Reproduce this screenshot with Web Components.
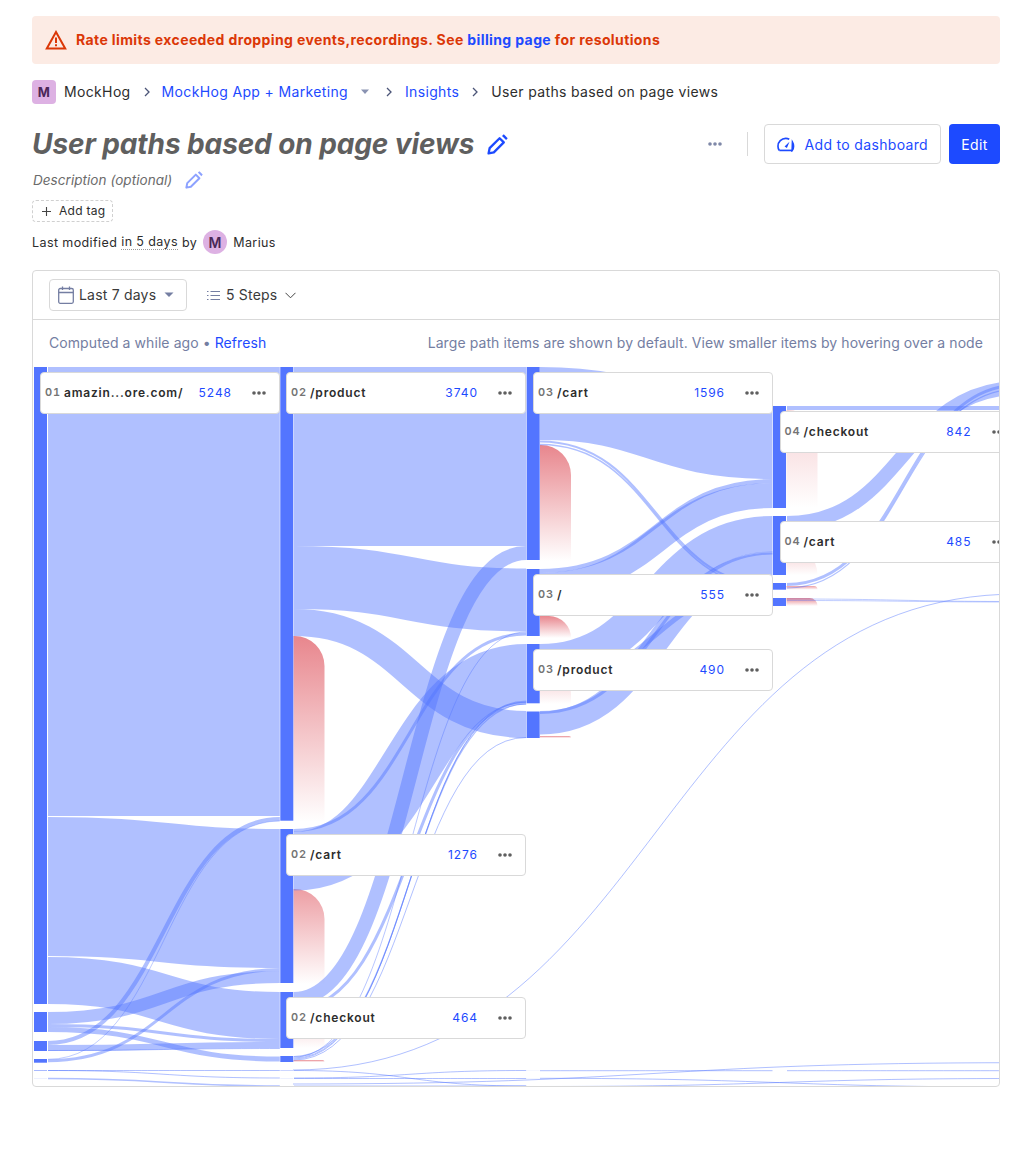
<!DOCTYPE html>
<html>
<head>
<meta charset="utf-8">
<title>User paths</title>
<style>
  html, body { margin: 0; background: #fff; }
  body {
    padding: 16px 32px 0;
    font-family: Inter, "Liberation Sans", sans-serif;
    color: #2d2d2d;
  }
</style>
</head>
<body>
<app-alert>Rate limits exceeded dropping events,recordings. See <a>billing page</a> for resolutions</app-alert>
<app-breadcrumbs></app-breadcrumbs>
<insight-header></insight-header>
<insight-card>
  <path-sankey>
    <path-node step="01" name="amazin...ore.com/" count="5248" style="left:7px;top:5px"></path-node>
    <path-node step="02" name="/product" count="3740" style="left:253px;top:5px"></path-node>
    <path-node step="02" name="/cart" count="1276" style="left:253px;top:467px"></path-node>
    <path-node step="02" name="/checkout" count="464" style="left:253px;top:630px"></path-node>
    <path-node step="03" name="/cart" count="1596" style="left:500px;top:5px"></path-node>
    <path-node step="03" name="/" count="555" style="left:500px;top:207px"></path-node>
    <path-node step="03" name="/product" count="490" style="left:500px;top:282px"></path-node>
    <path-node step="04" name="/checkout" count="842" style="left:746.5px;top:44px"></path-node>
    <path-node step="04" name="/cart" count="485" style="left:746.5px;top:154px"></path-node>
  </path-sankey>
</insight-card>

<script>
let dotsIcon = (color) => `<svg width="14" height="14" viewBox="0 0 14 14" fill="${color}"><circle cx="2" cy="7" r="1.800"/><circle cx="7" cy="7" r="1.800"/><circle cx="12" cy="7" r="1.800"/></svg>`;
let pencilIcon = (color, size) => `<svg width="${size}" height="${size}" viewBox="0 0 20 20" fill="none" stroke="${color}" stroke-width="2.200"><path d="M1.500 18.500l1-5 9.500-9.500 4 4L6.500 17.500z" stroke-linejoin="round"/><path d="M14.300 1.800l1.700-1.500 3.700 3.700-1.500 1.700z" fill="${color}" stroke="none"/></svg>`;

class AppAlert extends HTMLElement {
  constructor() {
    super();
    this.attachShadow({mode: 'open'}).innerHTML = `
      <style>
        :host {
          display: flex;
          align-items: center;
          gap: 9px;
          height: 48px;
          padding: 0 13px;
          box-sizing: border-box;
          background: #fcebe4;
          border-radius: 4px;
          color: #db3707;
          font-size: 14px;
          font-weight: 700;
          letter-spacing: 0.385px;
        }
        span { padding-bottom: 2px; }
        ::slotted(a) { color: #1d4aff; }
      </style>
      <svg width="22" height="20" viewBox="0 0 22 20" fill="none" stroke="#db3707" stroke-width="2"><path d="M11 2L1.800 18.500h18.400z"/><path d="M11 7.500v5.500"/><path d="M11 14.300v2"/></svg>
      <span><slot></slot></span>`;
  }
}
customElements.define('app-alert', AppAlert);

class AppBreadcrumbs extends HTMLElement {
  constructor() {
    super();
    let chevron = `<svg class="chev" width="6" height="10" viewBox="0 0 6 10" fill="none" stroke="#4b5578" stroke-width="1.300"><path d="M1 1l4 4-4 4"/></svg>`;
    this.attachShadow({mode: 'open'}).innerHTML = `
      <style>
        :host {
          display: flex;
          align-items: center;
          height: 24px;
          margin-top: 16px;
          font-size: 14px;
          letter-spacing: 0.35px;
          color: #2d2d2d;
        }
        .logo {
          width: 24px; height: 24px;
          border-radius: 4px;
          background: #ddb1e3;
          color: #4a2758;
          font-weight: 700;
          font-size: 13px;
          display: flex; align-items: center; justify-content: center;
          margin-right: 8px;
        }
        a, .txt { padding-bottom: 2px; }
        a { color: #1d4aff; }
        .chev { margin: 0 13px; }
        .caret { margin: 0 -1px 0 12px; }
      </style>
      <span class="logo">M</span>
      <span class="txt">MockHog</span>
      ${chevron.replace('class="chev"', 'class="chev" style="margin-right:12px"')}
      <a>MockHog App + Marketing</a>
      <svg class="caret" width="10" height="6" viewBox="0 0 10 6" fill="#8a93b2"><path d="M1 0.500h8L5 5z"/></svg>
      ${chevron.replace('class="chev"', 'class="chev" style="margin-left:17px"')}
      <a>Insights</a>
      ${chevron}
      <span class="txt">User paths based on page views</span>`;
  }
}
customElements.define('app-breadcrumbs', AppBreadcrumbs);

class InsightHeader extends HTMLElement {
  constructor() {
    super();
    this.attachShadow({mode: 'open'}).innerHTML = `
      <style>
        :host { display: block; margin-top: 20px; }
        .top { display: flex; align-items: center; height: 40px; }
        h1 {
          margin: 0;
          font-size: 28px;
          font-weight: 700;
          font-style: italic;
          color: #5f5f5f;
          letter-spacing: -0.1px;
          white-space: nowrap;
        }
        .title-edit { margin-left: 13px; display: flex; }
        .actions { margin-left: auto; display: flex; align-items: center; }
        .more { display: flex; margin-right: 25px; }
        .divider { width: 1px; height: 24px; background: #d9d9d9; margin-right: 16px; }
        button {
          font: inherit;
          font-size: 14px;
          letter-spacing: 0.33px;
          height: 40px;
          border-radius: 4px;
          display: flex;
          align-items: center;
          box-sizing: border-box;
          padding: 0 12px;
        }
        .dash {
          background: #fff;
          border: 1px solid #d9d9d9;
          color: #1d4aff;
          gap: 10px;
          width: 177px;
          white-space: nowrap;
        }
        .edit {
          background: #1d4aff;
          border: 0;
          color: #fff;
          margin-left: 8px;
          width: 51px;
          justify-content: center;
        }
        .desc {
          display: flex;
          align-items: center;
          gap: 13px;
          height: 20px;
          margin-top: 6px;
          font-size: 13.5px;
          letter-spacing: 0.05px;
          font-style: italic;
          color: #6b6b6b;
        }
        .desc span { margin-left: 1px; }
        .tag {
          display: inline-flex;
          align-items: center;
          gap: 7px;
          height: 22px;
          width: 81px;
          box-sizing: border-box;
          margin-top: 10px;
          padding-left: 8px;
          border: 1px dashed #d0d0d0;
          border-radius: 4px;
          font-size: 12px;
          letter-spacing: 0.3px;
          vertical-align: top;
        }
        .tag span { padding-bottom: 2px; }
        .meta {
          display: flex;
          align-items: center;
          height: 24px;
          margin-top: 8px;
          font-size: 12.5px;
          letter-spacing: 0.4px;
        }
        .when { border-bottom: 1px dotted #999; margin: 0 4px; line-height: 14px; }
        .avatar {
          width: 24px; height: 24px;
          border-radius: 50%;
          background: #ddb1e3;
          color: #4a2758;
          font-size: 14px;
          font-weight: 600;
          display: flex; align-items: center; justify-content: center;
          margin: 0 6px;
        }
      </style>
      <div class="top">
        <h1>User paths based on page views</h1>
        <span class="title-edit">${pencilIcon('#1d4aff', 21)}</span>
        <div class="actions">
          <span class="more">${dotsIcon('#7f88a8')}</span>
          <span class="divider"></span>
          <button class="dash">
            <svg width="18" height="16" viewBox="0 0 18 16" fill="none" stroke="#1d4aff" stroke-width="1.700"><path d="M2.400 14.600C1.400 13.400 1 12 1 10.200 1 5.800 4.600 2.200 9 2.200c1.300 0 2.500.3 3.600.9"/><path d="M15.900 6c.7 1.200 1.100 2.700 1.100 4.200 0 1.800-.4 3.200-1.400 4.400z"/><path d="M2.400 14.600h13.200"/><path d="M7.800 10.600l5-4.800-2.600 6.200z" fill="#1d4aff" stroke="none"/></svg>
            Add to dashboard
          </button>
          <button class="edit">Edit</button>
        </div>
      </div>
      <div class="desc"><span>Description (optional)</span>${pencilIcon('#8da2ff', 18)}</div>
      <div class="tag">
        <svg width="11" height="11" viewBox="0 0 11 11" stroke="#444" stroke-width="1.100"><path d="M5.500 1v9M1 5.500h9"/></svg>
        <span>Add tag</span>
      </div>
      <div class="meta">Last modified <span class="when">in 5 days</span> by <span class="avatar">M</span> Marius</div>`;
  }
}
customElements.define('insight-header', InsightHeader);

class InsightCard extends HTMLElement {
  constructor() {
    super();
    this.attachShadow({mode: 'open'}).innerHTML = `
      <style>
        :host {
          display: block;
          margin-top: 16px;
          border: 1px solid #d9d9d9;
          border-radius: 4px;
          overflow: hidden;
          height: 817px;
          box-sizing: border-box;
          font-size: 14px;
        }
        .toolbar {
          display: flex;
          align-items: center;
          height: 49px;
          box-sizing: border-box;
          padding: 0 16px;
          border-bottom: 1px solid #d9d9d9;
          letter-spacing: 0.2px;
          color: #3a3a3a;
        }
        .date {
          display: flex;
          align-items: center;
          width: 138px;
          height: 32px;
          box-sizing: border-box;
          padding-left: 8px;
          border: 1px solid #d9d9d9;
          border-radius: 4px;
        }
        .label { padding-bottom: 2px; }
        .date .label { margin-left: 5px; }
        .date .caret { margin-left: 8px; }
        .steps { display: flex; align-items: center; margin-left: 20px; }
        .steps .label { margin: 0 8px 0 6px; }
        .info {
          display: flex;
          justify-content: space-between;
          align-items: center;
          height: 47px;
          padding: 0 16px;
          color: #747ea2;
          letter-spacing: 0.08px;
        }
        .info span { padding-bottom: 2px; }
        .info a { color: #1d4aff; }
      </style>
      <div class="toolbar">
        <div class="date">
          <svg width="16" height="18" viewBox="0 0 16 18" fill="none" stroke="#747ea2" stroke-width="1.300"><rect x="0.700" y="2.500" width="14.600" height="14.800" rx="1.500"/><path d="M0.700 6.500h14.600M4.500 0.500v3.500M11.500 0.500v3.500"/></svg>
          <span class="label">Last 7 days</span>
          <svg class="caret" width="10" height="6" viewBox="0 0 10 6" fill="#747ea2"><path d="M0.500 0.500h9L5 5z"/></svg>
        </div>
        <div class="steps">
          <svg width="13" height="11" viewBox="0 0 13 11" stroke="#747ea2" stroke-width="1"><path d="M3.500 1.500H13M3.500 5.500H13M3.500 9.500H13M0 1.500h1.500M0 5.500h1.500M0 9.500h1.500"/></svg>
          <span class="label">5 Steps</span>
          <svg width="11" height="7" viewBox="0 0 11 7" fill="none" stroke="#444" stroke-width="1"><path d="M0.500 0.800L5.500 5.800l5-5"/></svg>
        </div>
      </div>
      <div class="info">
        <span>Computed a while ago &bull; <a>Refresh</a></span>
        <span>Large path items are shown by default. View smaller items by hovering over a node</span>
      </div>
      <slot></slot>`;
  }
}
customElements.define('insight-card', InsightCard);

class PathNode extends HTMLElement {
  constructor() {
    super();
    this.attachShadow({mode: 'open'}).innerHTML = `
      <style>
        :host {
          position: absolute;
          display: flex;
          align-items: center;
          width: 240px;
          height: 42px;
          box-sizing: border-box;
          padding: 0 13px 0 4px;
          background: #fff;
          border: 1px solid #d9d9d9;
          border-radius: 4px;
          font-size: 12px;
        }
        .step, .name, .count { padding-bottom: 2px; }
        .step {
          width: 15px;
          color: #747474;
          font-size: 11px;
          font-weight: 600;
          font-variant-numeric: tabular-nums;
          letter-spacing: 1px;
          margin-right: 4px;
        }
        .name { font-weight: 600; color: #2d2d2d; letter-spacing: 0.8px; }
        .count { margin-left: auto; color: #1d4aff; letter-spacing: 0.95px; margin-right: 20px; }
        .dots { display: flex; }
      </style>
      <span class="step"></span>
      <span class="name"></span>
      <span class="count"></span>
      <span class="dots">${dotsIcon('#5f5f5f')}</span>`;
  }

  connectedCallback() {
    this.shadowRoot.querySelector(".step").textContent = this.getAttribute("step");
    this.shadowRoot.querySelector(".name").textContent = this.getAttribute("name");
    this.shadowRoot.querySelector(".count").textContent = this.getAttribute("count");
  }
}
customElements.define('path-node', PathNode);

// [x0, y0, x1, y1, width], page coordinates, centre line of the ribbon
const C1 = 48, C2L = 279.8, C2 = 294, C3L = 526.2, C3 = 540, C4L = 772.5, C4 = 787, C5 = 1019;
const LINKS = [
  // step 1 to 2
  [C1, 591.5, C2L, 591.5, 449],
  [C1, 886.5, C2L, 898.5, 139],
  [C1, 980.5, C2L, 1015.5, 47],
  [C1, 1018, C2L, 977, 12],
  [C1, 1025.5, C2L, 1040.5, 3],
  [C1, 1029.5, C2L, 1059, 5],
  [C1, 1043, C2L, 819, 4],
  [C1, 1048, C2L, 1045, 6],
  [C1, 1050.5, C2L, 1048.5, 1],
  [C1, 1060.7, C2L, 969.5, 3],
  [C1, 1059.3, C2L, 821, 0.8],
  [C1, 1070.5, C2L, 1070.5, 1],
  [C1, 1070.5, C2L, 1078, 1],
  [C1, 1078.5, C2L, 1086, 1.5],
  // step 2 to 3
  [C2, 456.5, C3L, 456.5, 179],
  [C2, 577.5, C3L, 600, 63],
  [C2, 622.5, C3L, 724.5, 27],
  [C2, 861, C3L, 673.5, 59],
  [C2, 830.5, C3L, 634, 3],
  [C2, 999, C3L, 553, 14],
  [C2, 1009, C3L, 703, 3],
  [C2, 1057, C3L, 632, 0.9],
  [C2, 1058, C3L, 702, 1],
  [C2, 1059, C3L, 701, 1],
  [C2, 1060, C3L, 737.5, 1],
  [C2, 1056.5, C3L, 704, 1.2],
  [C2, 1070.5, C3L, 1086, 1],
  [C2, 1078, C3L, 1070.5, 1],
  [C2, 1086.2, C3L, 1086.2, 1.5],
  [C2, 1078.5, C3L, 1078.5, 1],
  // step 3 to 4
  [C3, 403.5, C4L, 442.5, 73],
  [C3, 441.5, C4L, 585, 2.2],
  [C3, 444.5, C4L, 587.5, 1.6],
  [C3, 571, C4L, 481, 4],
  [C3, 585.5, C4L, 495.5, 25],
  [C3, 662, C4L, 534, 36],
  [C3, 723, C4L, 564, 23],
  [C3, 712.5, C4L, 553, 3],
  [C3, 683, C4L, 586, 5],
  [C3, 1070.7, C4L, 1070.7, 1],
  [C3, 1078.3, C5, 1087, 1],
  [C3, 1086.5, C5, 1078.5, 1],
  // step 4 onwards
  [C4, 408, C5, 408, 4],
  [C4, 523, C5, 388, 14],
  [C4, 584.5, C5, 385, 3],
  [C4, 588, C5, 389, 1.2],
  [C4, 599, C5, 601.5, 0.8],
  [C4, 600.5, C5, 602, 0.8],
  [C4, 1070.7, C5, 1070.7, 1],
  // long ones that skip a step
  [293, 1070, 1019, 594, 1],
  [293, 1084, 1019, 1062.7, 1]
];
const BARS = [
  [34, 367, 1004], [34, 1012, 1032], [34, 1041, 1051], [34, 1059, 1062.7],
  [280.3, 367, 820.7], [280.3, 829, 983], [280.3, 992, 1048], [280.3, 1056, 1062],
  [526.7, 367, 560], [526.7, 569, 636], [526.7, 644, 703.3], [526.7, 711.5, 738],
  [773, 406, 508], [773, 516, 575], [773, 583, 589.7], [773, 598, 606]
];
// the tiny nodes along the bottom edge, [x, y, opacity]
const STUBS = [
  [34, 1070, 0.5], [34, 1078, 0.1], [280.3, 1070, 0.3], [280.3, 1078, 0.1], [280.3, 1086, 0.1],
  [526.7, 1070, 0.06], [526.7, 1078, 0.06], [526.7, 1086, 0.06]
];
// [x, top, bottom, opacity]
const DROPOFFS = [
  [293.5, 636, 822, 1], [293.5, 889, 984, 0.8], [293.5, 1007, 1048, 0.55], [293.5, 1060, 1062, 1],
  [540, 445, 561, 1], [540, 616, 638, 1], [540, 664, 704, 0.6], [540, 736, 738, 1],
  [786.5, 410, 508, 0.4], [786.5, 545, 575, 0.5], [786.5, 586, 589.7, 0.8], [786.5, 598, 606, 1]
];

class PathSankey extends HTMLElement {
  constructor() {
    super();
    let links = LINKS.map(([x0, y0, x1, y1, w]) => {
      let mx = (x0 + x1) / 2;
      return `<path d="M${x0} ${y0}C${mx} ${y0} ${mx} ${y1} ${x1} ${y1}" stroke-width="${w}"/>`;
    }).join("");
    let bars = BARS.map(([x, a, b]) => `<rect x="${x}" y="${a}" width="13" height="${b - a}"/>`).join("");
    let stubs = STUBS.map(([x, y, o]) => `<rect x="${x}" y="${y}" width="13" height="1" opacity="${o}"/>`).join("");
    let drops = DROPOFFS.map(([x, a, b, o]) => {
      let r = Math.min(30, b - a);
      return `<path fill="url(#drop)" opacity="${o}" d="M${x} ${a}H${x + 31 - r}A${r} ${r} 0 0 1 ${x + 31} ${a + r}V${b}H${x}z"/>`;
    }).join("");
    this.attachShadow({mode: 'open'}).innerHTML = `
      <style>
        :host {
          display: block;
          position: relative;
          height: 720px;
          overflow: hidden;
        }
        svg { display: block; position: absolute; left: 0; top: 0; }
        .links { fill: none; stroke: #5375ff; stroke-opacity: 0.46; }
        .bars { fill: #5375ff; }
      </style>
      <svg width="966" height="720" viewBox="33 367 966 720">
        <defs>
          <linearGradient id="drop" x1="0" y1="0" x2="0" y2="1">
            <stop offset="0" stop-color="#e8868d"/>
            <stop offset="1" stop-color="#e8868d" stop-opacity="0"/>
          </linearGradient>
        </defs>
        <g>${drops}</g>
        <g class="links">${links}</g>
        <g class="bars">${bars}${stubs}</g>
      </svg>
      <slot></slot>`;
  }
}
customElements.define('path-sankey', PathSankey);
</script>
</body>
</html>
